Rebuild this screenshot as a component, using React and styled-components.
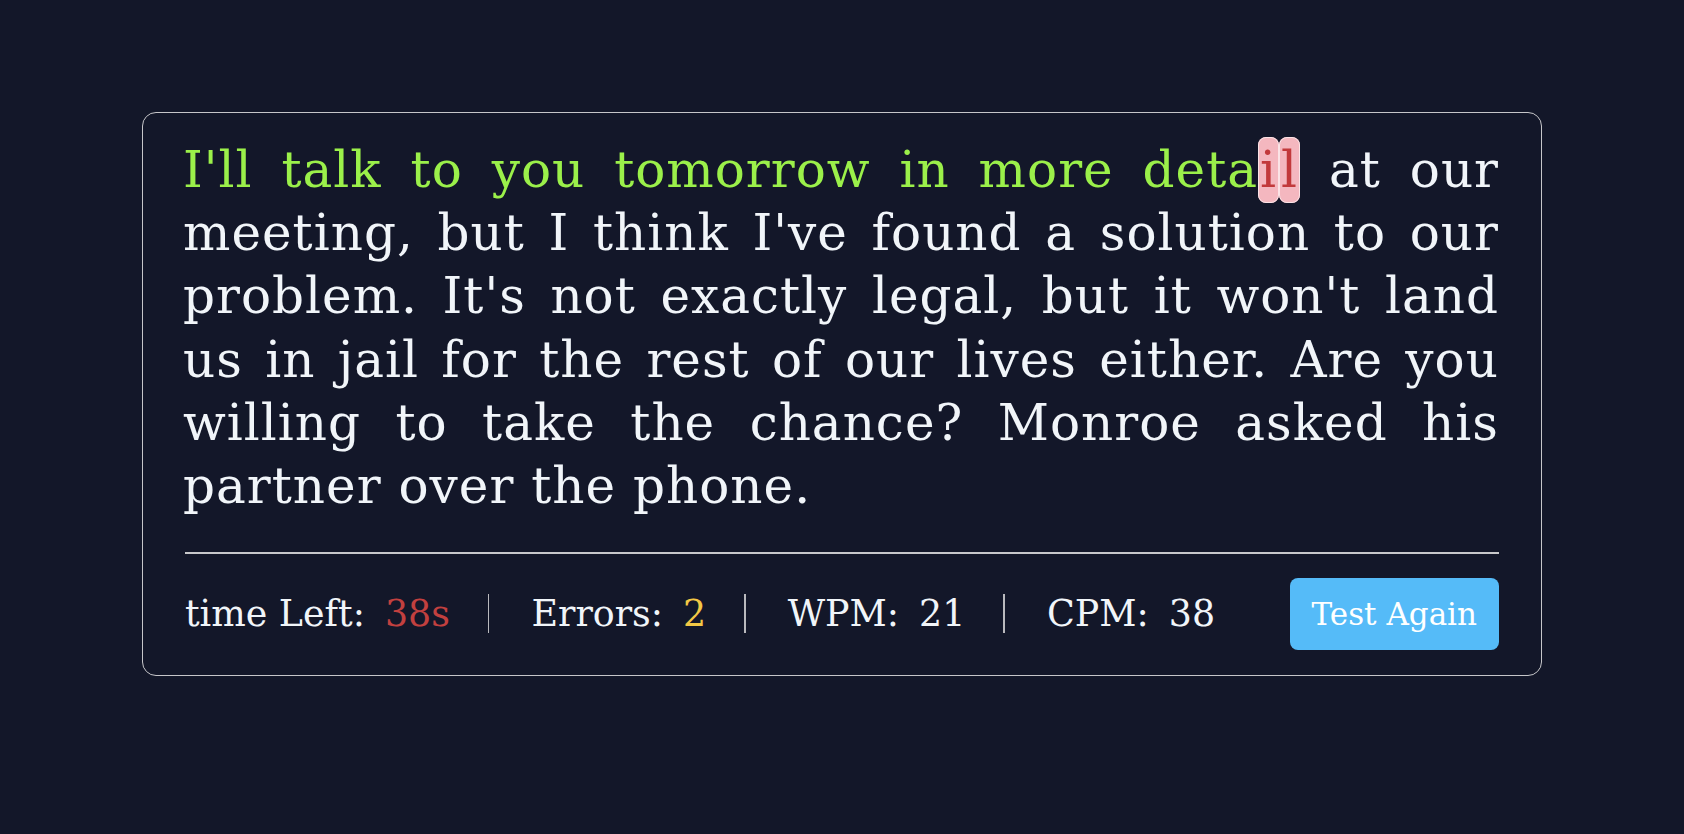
import React from 'react';
import styled, { createGlobalStyle } from 'styled-components';

const passage =
  "I'll talk to you tomorrow in more detail at our meeting, but I think I've found a solution to our problem. It's not exactly legal, but it won't land us in jail for the rest of our lives either. Are you willing to take the chance? Monroe asked his partner over the phone.";

// characters typed so far, and which of them were wrong
const typed = "I'll talk to you tomorrow in more detail".length;
const wrong = new Set([38, 39]);

const stats = [
  { label: 'time Left:', value: '38s', tone: 'red' },
  { label: 'Errors:', value: '2', tone: 'yellow' },
  { label: 'WPM:', value: '21' },
  { label: 'CPM:', value: '38' }
];

const App = () => {
  const chars = passage.split('').map((ch, i) => {
    let state = 'pending';
    if (i < typed) state = wrong.has(i) ? 'wrong' : 'correct';
    return (
      <Char key={i} state={state}>
        {ch}
      </Char>
    );
  });

  return (
    <>
      <GlobalStyle />
      <Page>
        <Card>
          <Passage>{chars}</Passage>
          <Divider />
          <StatsRow>
            {stats.map((s, i) => (
              <React.Fragment key={s.label}>
                {i > 0 && <Separator />}
                <Stat>
                  <span>{s.label}</span>
                  <Value tone={s.tone}>{s.value}</Value>
                </Stat>
              </React.Fragment>
            ))}
            <Button>Test Again</Button>
          </StatsRow>
        </Card>
      </Page>
    </>
  );
};

export default App;

const GlobalStyle = createGlobalStyle`
  html, body {
    margin: 0;
    padding: 0;
    background: #131729;
  }
  body {
    font-family: "DejaVu Serif", "Liberation Serif", serif;
    color: #f1f5f9;
  }
`;

const Page = styled.div`
  min-height: 834px;
  box-sizing: border-box;
  padding-top: 112px;
  display: flex;
  justify-content: center;
  align-items: flex-start;
`;

const Card = styled.div`
  width: 1400px;
  box-sizing: border-box;
  border: 1.5px solid #c6c6c9;
  border-radius: 14px;
  padding: 26px 42px 25px 40px;
`;

const Passage = styled.p`
  margin: 0;
  font-size: 50px;
  line-height: 63.2px;
  letter-spacing: 1px;
  text-align: justify;
  color: #f1f5f9;
`;

const charColors = {
  correct: '#9bf04a',
  wrong: '#c2393b',
  pending: '#f1f5f9'
};

const Char = styled.span`
  color: ${p => charColors[p.state]};
  ${p =>
    p.state === 'wrong' &&
    `
    background: #f4b7bf;
    border: 1px solid #fbe3e6;
    border-radius: 8px;
    padding: 3px 1px;
  `}
`;

const Divider = styled.hr`
  margin: 34px 0 0 2px;
  border: none;
  height: 1.5px;
  background: #c8c8cb;
`;

const StatsRow = styled.div`
  display: flex;
  align-items: center;
  margin-top: 24px;
  padding-left: 2px;
  font-size: 36.4px;
`;

const Stat = styled.div`
  display: flex;
  align-items: baseline;
  gap: 20px;
  white-space: nowrap;
`;

const valueColors = {
  red: '#c2403f',
  yellow: '#f3c845'
};

const Value = styled.span`
  color: ${p => valueColors[p.tone] || '#f1f5f9'};
`;

const Separator = styled.div`
  width: 1.5px;
  height: 39px;
  background: #b9b9bd;
  margin: 0 42px 0 38px;
`;

const Button = styled.button`
  margin-left: auto;
  height: 72px;
  padding: 0 22px;
  border: none;
  border-radius: 8px;
  background: #55bbf8;
  color: #ffffff;
  font-family: "DejaVu Serif", "Liberation Serif", serif;
  font-size: 31px;
  cursor: pointer;
`;
